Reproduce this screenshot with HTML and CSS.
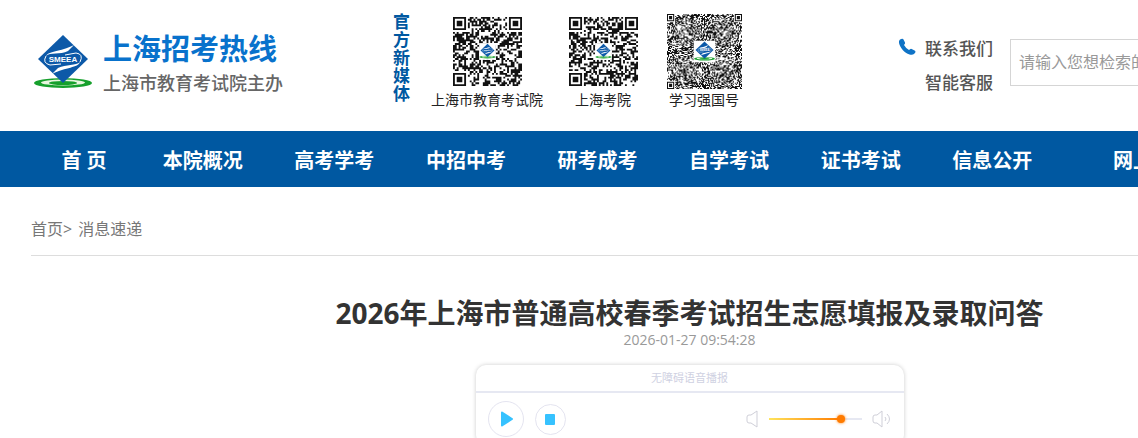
FILE: index.html
```html
<!DOCTYPE html>
<html lang="zh-CN">
<head>
<meta charset="utf-8">
<title>上海招考热线</title>
<link rel="stylesheet" href="styles.css">
</head>
<body>
<svg class="defs" aria-hidden="true">
  <symbol id="emblem" viewBox="0 0 60 56">
    <ellipse cx="30" cy="48" rx="29" ry="5" fill="#16a02c"/>
    <ellipse cx="30" cy="47.500" rx="22" ry="3" fill="#e8f6df"/>
    <ellipse cx="30" cy="48" rx="14" ry="2" fill="#16a02c"/>
    <path d="M30 0L55 24L30 48L5 24Z" fill="#0c59a8"/>
    <path d="M13 21C15 16 27 17 41 10L35 16C27 20 17 17 13 21ZM47 27C45 33 33 32 19 39L25 33C33 29 43 31 47 27Z" fill="#fff"/>
    <path d="M13 21Q9 28 17 30L28 29M47 27Q51 19 43 18L32 20" fill="none" stroke="#fff" stroke-width="1"/>
    <text class="emblem-text" x="30" y="27" text-anchor="middle" fill="#fff">SMEEA</text>
  </symbol>
</svg>
<div class="page">
  <header class="header">
    <a class="brand" href="#">
      <svg class="emblem" aria-hidden="true"><use href="#emblem"/></svg>
      <span class="brand-text">
        <span class="brand-name">上海招考热线</span>
        <span class="brand-owner">上海市教育考试院主办</span>
      </span>
    </a>
    <div class="media">
      <div class="media-title">官方新媒体</div>
      <figure class="code">
        <svg class="qr" data-size="37" data-seed="11" data-mark="9"></svg>
        <figcaption>上海市教育考试院</figcaption>
      </figure>
      <figure class="code code-mid">
        <svg class="qr" data-size="37" data-seed="29" data-mark="9"></svg>
        <figcaption>上海考院</figcaption>
      </figure>
      <figure class="code code-dense">
        <svg class="qr" data-size="73" data-seed="53" data-mark="21"></svg>
        <figcaption>学习强国号</figcaption>
      </figure>
    </div>
    <div class="contact">
      <svg class="phone" viewBox="0 0 18 18" aria-hidden="true"><path d="M2 1.500L4 .8Q5 .6 5.500 1.500L7 4.500Q7.300 5.500 6.500 6.300L6 7Q8 10.500 11 12L12 11.200Q12.800 10.600 13.700 11L17 12.800Q17.800 13.500 17.300 14.500L16 16Q14.500 17.300 11.500 16.500C6.500 15 2 9.500 1 5Q.5 2.500 2 1.500Z" fill="#0f73c6"/></svg>
      <div class="contact-links"><a href="#">联系我们</a><a href="#">智能客服</a></div>
    </div>
    <input class="search" type="text" aria-label="检索" placeholder="请输入您想检索的内容">
  </header>
  <nav class="nav">
    <a class="nav-home" href="#">首 页</a>
    <a href="#">本院概况</a>
    <a href="#">高考学考</a>
    <a href="#">中招中考</a>
    <a href="#">研考成考</a>
    <a href="#">自学考试</a>
    <a href="#">证书考试</a>
    <a href="#">信息公开</a>
    <a class="nav-last" href="#">网上咨询</a>
  </nav>
  <main class="main">
    <div class="crumbs"><a href="#">首页</a>&gt; <a href="#">消息速递</a></div>
    <h1 class="title">2026年上海市普通高校春季考试招生志愿填报及录取问答</h1>
    <div class="date">2026-01-27 09:54:28</div>
    <section class="player">
      <div class="player-title">无障碍语音播报</div>
      <div class="controls">
        <button class="round play" aria-label="播放"><svg width="14" height="16" viewBox="0 0 14 16"><path d="M2 1.500L12 8L2 14.500Z" fill="#36c2ff" stroke="#36c2ff" stroke-width="2" stroke-linejoin="round"/></svg></button>
        <button class="round stop" aria-label="停止"><svg width="10" height="11"><rect width="10" height="11" rx="1" fill="#36c2ff"/></svg></button>
        <svg class="speaker" viewBox="0 0 12 18" aria-hidden="true"><path d="M11 1V17L5 13H3Q1 13 1 11V7Q1 5 3 5H5Z"/></svg>
        <input class="volume" type="range" min="0" max="100" value="80" aria-label="音量">
        <svg class="speaker speaker-loud" viewBox="0 0 20 18" aria-hidden="true"><path d="M10 1V17L5 13H3Q1 13 1 11V7Q1 5 3 5H5ZM13 7Q15 9 13 11M15 4Q20 9 15 14"/></svg>
      </div>
    </section>
  </main>
</div>
<script src="codes.js"></script>
</body>
</html>
```
FILE: styles.css
```css
* { box-sizing: border-box; }
body {
  margin: 0;
  overflow: hidden;
  background: #fff;
  font-family: "Open Sans", "Noto Sans CJK SC", sans-serif;
  color: #333;
}
a { color: inherit; text-decoration: none; }
.defs { display: none; }
.page { min-width: 1379px; }

.header {
  display: flex;
  align-items: flex-start;
  min-height: 131px;
  padding: 0 31px;
}
.brand { display: flex; gap: 10px; width: 362px; padding: 35px 0 0 2px; }
.emblem { width: 60px; height: 56px; }
.emblem-text { font: bold 8px "Liberation Sans", sans-serif; }
.brand-text { display: flex; flex-direction: column; }
.brand-name { font-size: 29px; line-height: 28px; font-weight: 700; color: #0872cc; }
.brand-owner { padding-top: 6px; font-size: 18px; line-height: 28px; font-weight: 500; color: #666; }

.media { display: flex; width: 504px; padding-top: 13px; }
.media-title { width: 17px; font-size: 17px; line-height: 18px; font-weight: 700; color: #0058a1; }
.code { display: flex; flex-direction: column; align-items: center; width: 112px; margin: 0 0 0 21px; padding-top: 4px; }
.code-mid { width: 70px; margin-left: 25px; }
.code-dense { width: 76px; margin-left: 28px; padding-top: 1px; }
.qr { width: 69px; height: 69px; }
.code-dense .qr { width: 75px; height: 75px; }
.code figcaption { margin-top: 4px; font-size: 14px; line-height: 20px; white-space: nowrap; color: #222; }
.code-dense figcaption { margin-top: 1px; }

.contact { display: flex; gap: 9px; width: 113px; padding: 32px 0 0 1px; }
.phone { width: 18px; height: 18px; margin-top: 6px; }
.contact-links { display: flex; flex-direction: column; font-size: 17px; line-height: 34px; font-weight: 500; color: #555; }
.search {
  flex: 1;
  height: 47px;
  margin-top: 39px;
  padding: 0 8px 2px;
  border: 1px solid #d5d5d5;
  font: inherit;
  font-size: 16px;
}
.search::placeholder { color: #999; }

.nav {
  display: flex;
  padding: 2px 31px 0;
  background: #0058a1;
  font-size: 20px;
  line-height: 54px;
  font-weight: 700;
  text-align: center;
  color: #fff;
}
.nav a { flex: 1; padding-top: 1px; height: 54px; }
.nav .nav-home { flex: 0 0 106px; }
.nav .nav-last { flex: 0 0 290px; padding-left: 55px; text-align: left; }

.main { padding: 24px 31px 0; }
.crumbs { height: 45px; border-bottom: 1px solid #ddd; font-size: 16px; line-height: 36px; color: #777; }
.crumbs a:last-child { margin-left: 2px; }
.title { margin: 37px 0 0; font-size: 28px; line-height: 40px; text-align: center; }
.date { font-size: 14px; line-height: 14px; text-align: center; color: #999; }

.player { width: 428px; margin: 18px auto 0; border-radius: 10px; background: #fff; box-shadow: 0 0 4px #ccc; }
.player-title { border-bottom: 2px solid #e6e8f2; font-size: 11px; line-height: 26px; text-align: center; color: #cfd1e2; }
.controls { display: flex; align-items: center; padding: 8px 12px; }
.round { display: flex; align-items: center; justify-content: center; padding: 0; border: 1px solid #e4e4f0; border-radius: 50%; background: #fff; }
.play { width: 36px; height: 36px; padding-left: 3px; }
.stop { width: 31px; height: 31px; margin-left: 11px; }
.speaker { width: 12px; height: 18px; margin-left: auto; fill: none; stroke: #cfcfd8; stroke-width: 1; }
.speaker-loud { width: 20px; margin-left: 10px; }
.volume { width: 93px; height: 18px; margin: 0 0 0 11px; appearance: none; background: none; }
.volume::-webkit-slider-runnable-track { height: 2px; background: linear-gradient(to right, #ffe45c, #ff7b00 77%, #e6e8f2 77%); }
.volume::-webkit-slider-thumb { width: 8px; height: 8px; margin-top: -3px; appearance: none; border-radius: 50%; background: #ff7b00; box-shadow: 0 0 3px #ff7b00; }
```
FILE: codes.js
```js
// Fills each code with modules, corner finders and the centre emblem.
document.querySelectorAll('.qr').forEach(function (svg) {
  const n = Number(svg.dataset.size);
  const mark = Number(svg.dataset.mark);
  let seed = Number(svg.dataset.seed);
  const next = function () {
    seed = (seed + 0x6d2b79f5) | 0;
    let t = Math.imul(seed ^ (seed >>> 15), seed | 1);
    t ^= t + Math.imul(t ^ (t >>> 7), t | 61);
    return ((t ^ (t >>> 14)) >>> 0) / 4294967296;
  };
  const finder = function (x, y) {
    const cx = x < 8 ? 3 : x > n - 9 ? n - 4 : -1;
    const cy = y < 8 ? 3 : y > n - 9 ? n - 4 : -1;
    if (cx < 0 || cy < 0 || (cx > 3 && cy > 3)) return null;
    const d = Math.max(Math.abs(x - cx), Math.abs(y - cy));
    return d === 3 || d < 2;
  };
  let path = '';
  for (let y = 0; y < n; y++) {
    for (let x = 0; x < n; x++) {
      const random = next() < 0.52;
      const fixed = finder(x, y);
      if (fixed === null ? random : fixed) path += 'M' + x + ' ' + y + 'h1v1h-1z';
    }
  }
  const start = (n - mark) / 2;
  svg.setAttribute('viewBox', '0 0 ' + n + ' ' + n);
  svg.innerHTML = '<path fill="#111" d="' + path + '"/>' +
    '<rect fill="#fff" x="' + start + '" y="' + start + '" width="' + mark + '" height="' + mark + '"/>' +
    '<use href="#emblem" x="' + start + '" y="' + start + '" width="' + mark + '" height="' + mark + '"/>';
});
```
